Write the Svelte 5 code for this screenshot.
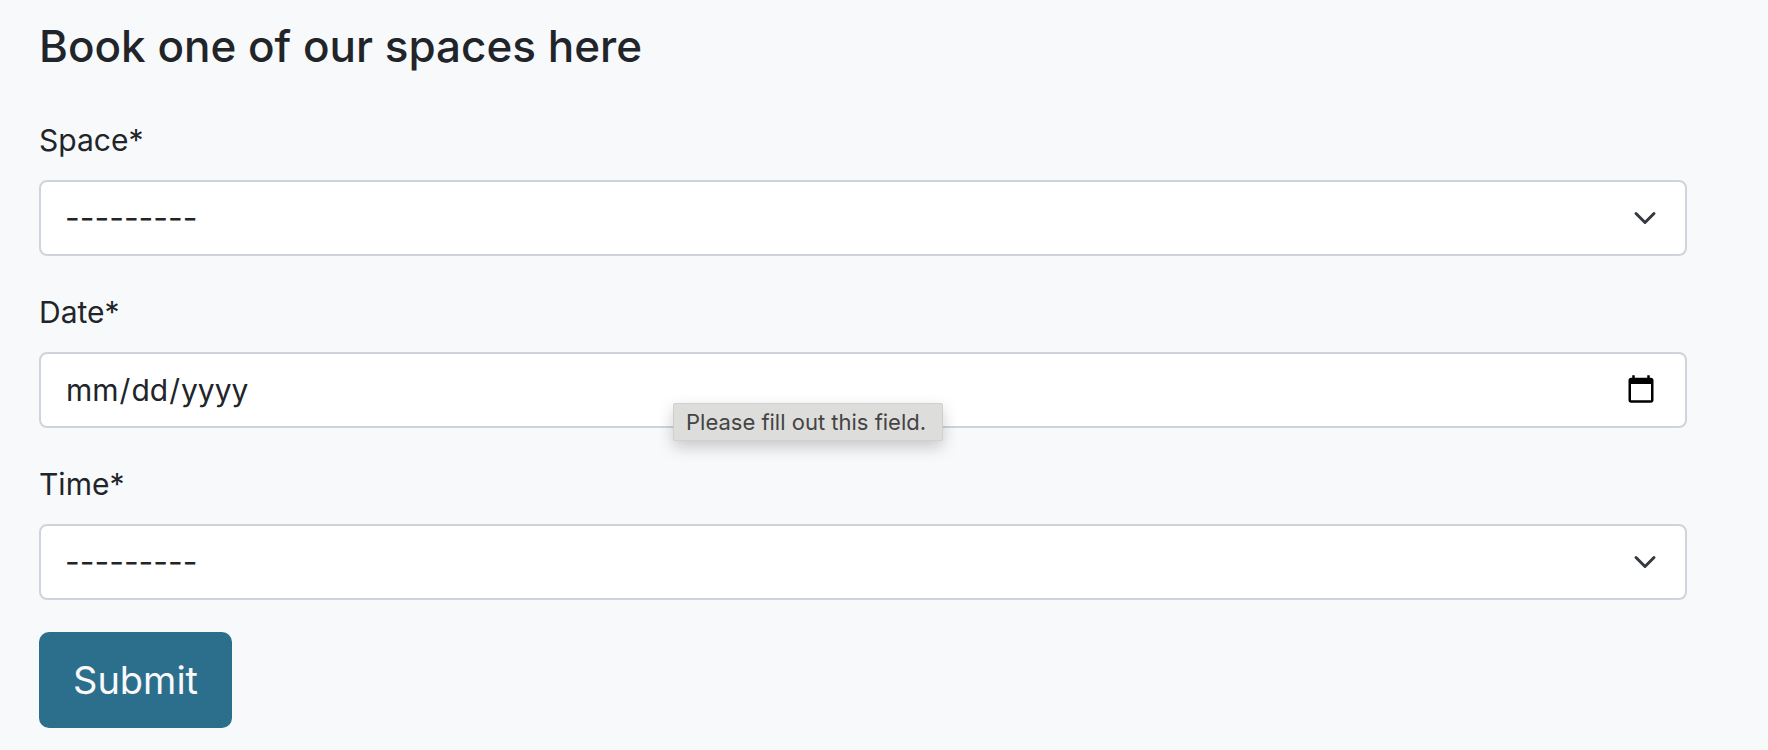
<script>
  const empty = '---------';
  let space = $state('');
  let date = $state('');
  let time = $state('');
</script>

<main>
  <h1>Book one of our spaces here</h1>
  <form onsubmit={(event) => event.preventDefault()}>
    <div class="field">
      <label for="space">Space*</label>
      <select id="space" bind:value={space} required>
        <option value="">{empty}</option>
      </select>
    </div>
    <div class="field">
      <label for="date">Date*</label>
      <input id="date" type="date" bind:value={date} required aria-describedby="date-hint" />
      <span class="tooltip" id="date-hint" role="tooltip">Please fill out this field.</span>
    </div>
    <div class="field">
      <label for="time">Time*</label>
      <select id="time" bind:value={time} required>
        <option value="">{empty}</option>
      </select>
    </div>
    <button type="submit">Submit</button>
  </form>
</main>

<style>
  :global(body) {
    margin: 0;
    background: #f8f9fb;
  }

  main {
    box-sizing: border-box;
    padding: 17px 81px 22px 39px;
    color: #212529;
    font-family: Inter, sans-serif;
    font-size: 30px;
    line-height: 48px;
  }

  h1 {
    margin: 0 0 41px;
    font-size: 44px;
    font-weight: 500;
    line-height: 58px;
  }

  .field {
    position: relative;
    display: flex;
    flex-direction: column;
    gap: 16px;
    margin-bottom: 32px;
  }

  select,
  input {
    box-sizing: border-box;
    width: 100%;
    height: 76px;
    margin: 0;
    padding: 12px 24px;
    border: 2px solid #ced4da;
    border-radius: 8px;
    background-color: #fff;
    color: inherit;
    font: inherit;
    appearance: none;
  }

  select {
    padding-right: 72px;
    font-size: 32px;
    background-image: url("data:image/svg+xml,%3Csvg xmlns='http://www.w3.org/2000/svg' viewBox='0 0 16 16'%3E%3Cpath fill='none' stroke='%23343a40' stroke-linecap='round' stroke-linejoin='round' stroke-width='2' d='m2 5 6 6 6-6'/%3E%3C/svg%3E");
    background-repeat: no-repeat;
    background-position: right 24px center;
    background-size: 32px 24px;
  }

  input::-webkit-calendar-picker-indicator {
    width: 32px;
    height: 32px;
    padding: 0;
    margin-right: 4px;
    background-size: contain;
  }

  .tooltip {
    position: absolute;
    top: 115px;
    left: 634px;
    padding: 4px 16px 4px 12px;
    border: 1px solid #d0d0ce;
    border-radius: 2px;
    background: #dddddb;
    box-shadow: 0 6px 16px rgb(0 0 0 / 20%);
    color: #444;
    font-size: 22px;
    line-height: 28px;
    white-space: nowrap;
  }

  button {
    display: block;
    padding: 16px 32px;
    border: 2px solid #2c6f8d;
    border-radius: 10px;
    background: #2c6f8d;
    color: #f8f9fb;
    font: inherit;
    font-size: 38px;
    line-height: 60px;
  }
</style>
